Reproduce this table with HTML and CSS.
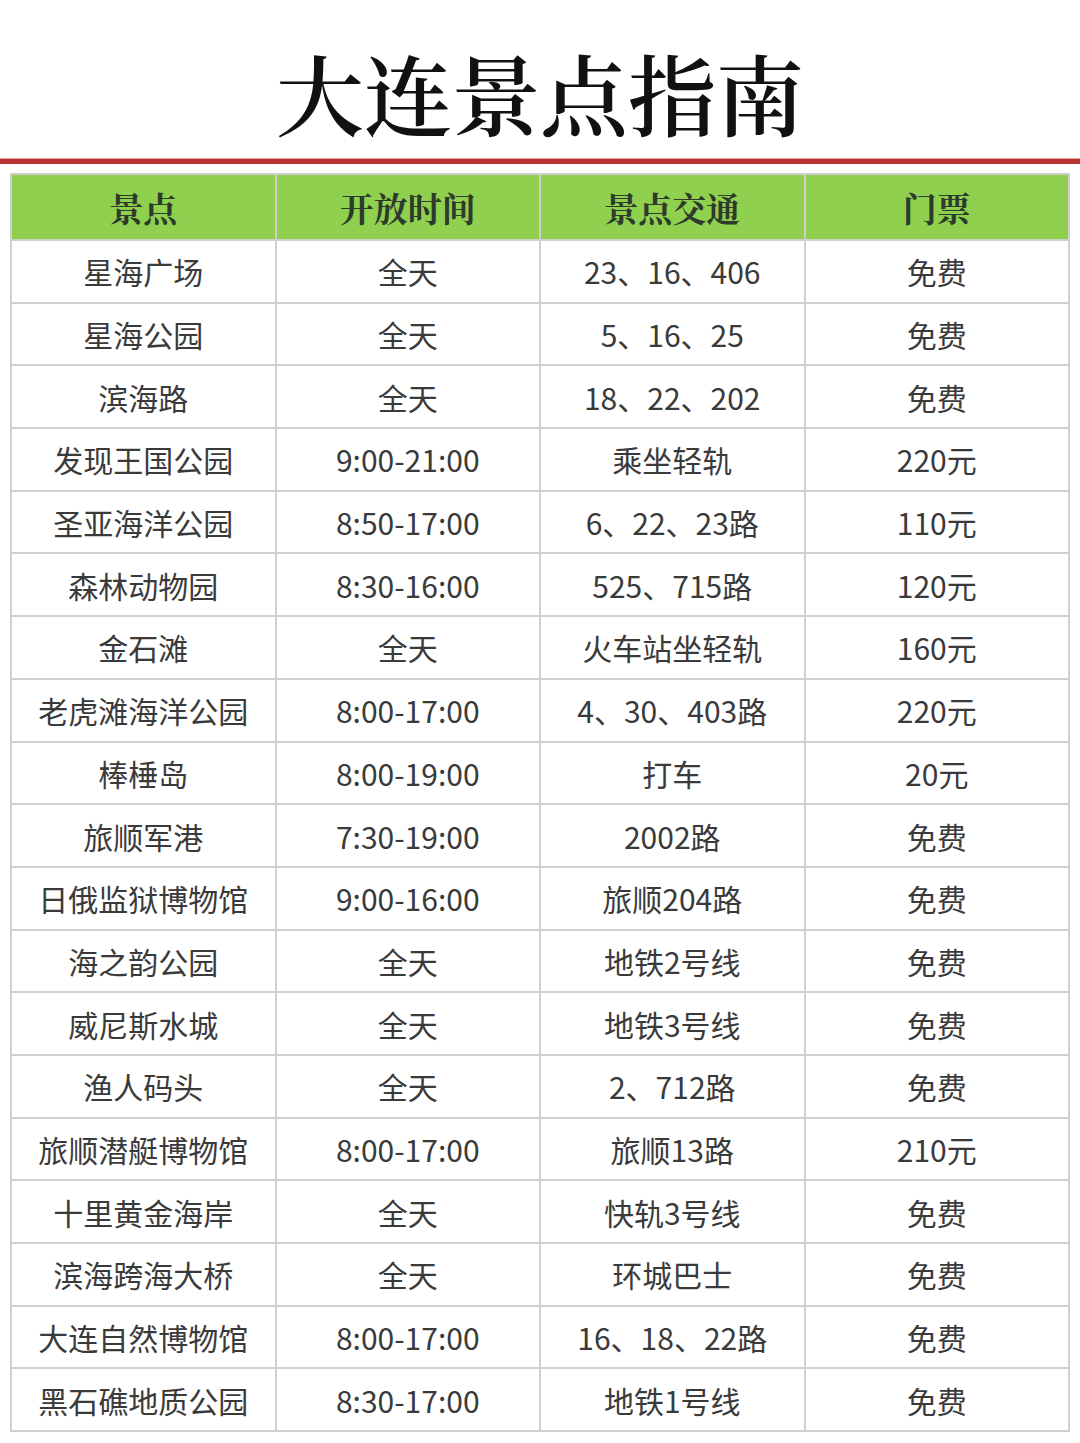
FILE: index.html
```html
<!DOCTYPE html>
<html lang="zh">
<head>
<meta charset="utf-8">
<link rel="stylesheet" href="styles.css">
</head>
<body>
<header class="title-wrap">
  <h1 class="title">大连景点指南</h1>
</header>
<div class="rule"></div>
<table class="guide">
  <thead>
    <tr><th>景点</th><th>开放时间</th><th>景点交通</th><th>门票</th></tr>
  </thead>
  <tbody>
    <tr><td>星海广场</td><td>全天</td><td>23、16、406</td><td>免费</td></tr>
    <tr><td>星海公园</td><td>全天</td><td>5、16、25</td><td>免费</td></tr>
    <tr><td>滨海路</td><td>全天</td><td>18、22、202</td><td>免费</td></tr>
    <tr><td>发现王国公园</td><td>9:00-21:00</td><td>乘坐轻轨</td><td>220元</td></tr>
    <tr><td>圣亚海洋公园</td><td>8:50-17:00</td><td>6、22、23路</td><td>110元</td></tr>
    <tr><td>森林动物园</td><td>8:30-16:00</td><td>525、715路</td><td>120元</td></tr>
    <tr><td>金石滩</td><td>全天</td><td>火车站坐轻轨</td><td>160元</td></tr>
    <tr><td>老虎滩海洋公园</td><td>8:00-17:00</td><td>4、30、403路</td><td>220元</td></tr>
    <tr><td>棒棰岛</td><td>8:00-19:00</td><td>打车</td><td>20元</td></tr>
    <tr><td>旅顺军港</td><td>7:30-19:00</td><td>2002路</td><td>免费</td></tr>
    <tr><td>日俄监狱博物馆</td><td>9:00-16:00</td><td>旅顺204路</td><td>免费</td></tr>
    <tr><td>海之韵公园</td><td>全天</td><td>地铁2号线</td><td>免费</td></tr>
    <tr><td>威尼斯水城</td><td>全天</td><td>地铁3号线</td><td>免费</td></tr>
    <tr><td>渔人码头</td><td>全天</td><td>2、712路</td><td>免费</td></tr>
    <tr><td>旅顺潜艇博物馆</td><td>8:00-17:00</td><td>旅顺13路</td><td>210元</td></tr>
    <tr><td>十里黄金海岸</td><td>全天</td><td>快轨3号线</td><td>免费</td></tr>
    <tr><td>滨海跨海大桥</td><td>全天</td><td>环城巴士</td><td>免费</td></tr>
    <tr><td>大连自然博物馆</td><td>8:00-17:00</td><td>16、18、22路</td><td>免费</td></tr>
    <tr><td>黑石礁地质公园</td><td>8:30-17:00</td><td>地铁1号线</td><td>免费</td></tr>
  </tbody>
</table>
</body>
</html>
```
FILE: styles.css
```css
html, body {
  margin: 0;
  padding: 0;
  background: #ffffff;
}
body {
  width: 1080px;
  height: 1443px;
  overflow: hidden;
  font-family: "Noto Sans CJK SC", "Noto Sans", sans-serif;
}
.title-wrap {
  height: 158px;
  display: flex;
  align-items: center;
  justify-content: center;
}
.title {
  margin: 0;
  padding-top: 24px;
  font-family: "Noto Serif CJK SC", "Noto Sans CJK SC", serif;
  font-weight: 600;
  font-size: 88px;
  line-height: 1;
  color: #111111;
}
.rule {
  height: 5px;
  background: #b83232;
  border-top: 1px solid #e9a0a0;
}
.guide {
  margin: 9px 0 0 10px;
  width: 1060px;
  border-collapse: collapse;
  table-layout: fixed;
}
.guide th, .guide td {
  border: 2px solid #cfcfcf;
  text-align: center;
  padding: 0;
}
.guide th {
  height: 64px;
  background: #8fd14f;
  font-family: "Noto Serif CJK SC", "Noto Sans CJK SC", serif;
  font-weight: 700;
  font-size: 34px;
  color: #2e3a2c;
}
.guide td {
  height: 60.7px;
  font-size: 30px;
  color: #3a3a3a;
  font-weight: 400;
}
```
